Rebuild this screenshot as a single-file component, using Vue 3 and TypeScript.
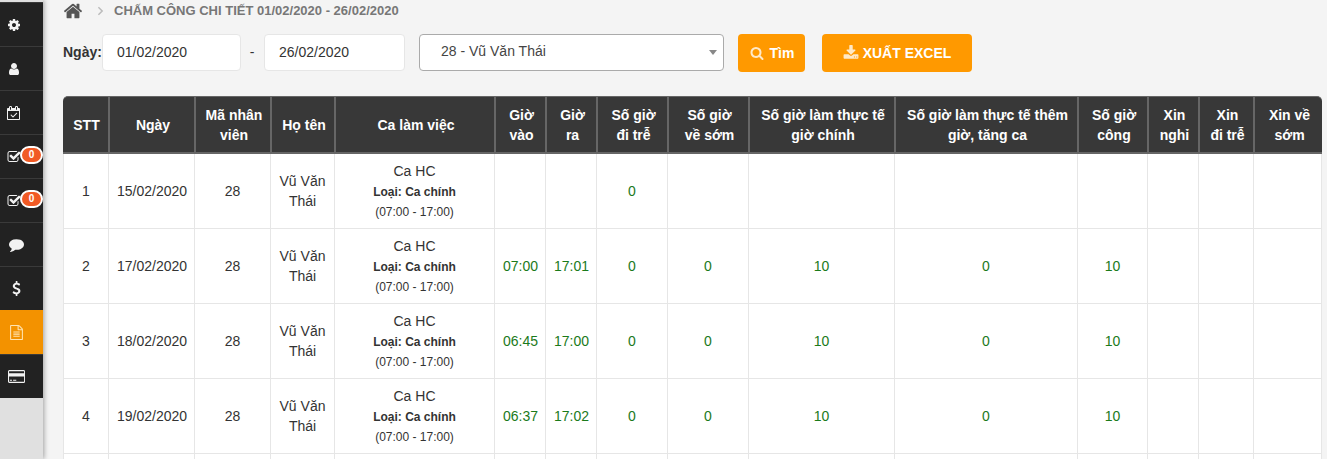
<script setup lang="ts">
const icons: Record<string, { box: string; d: string }> = {
  home: { box: '0 0 1792 1792', d: 'M1472 992v480q0 26-19 45t-45 19h-384v-384h-256v384h-384q-26 0-45-19t-19-45v-480q0-1 .5-3t.5-3l575-474 575 474q1 2 1 6zm223-69l-62 74q-8 9-21 11h-3q-13 0-21-7l-692-577-692 577q-12 8-24 7-13-2-21-11l-62-74q-8-10-7-23.500t11-21.500l719-599q32-26 76-26t76 26l244 204v-195q0-14 9-23t23-9h192q14 0 23 9t9 23v408l219 182q10 8 11 21.500t-7 23.500z' },
  cog: { box: '0 0 1792 1792', d: 'M1152 896q0-106-75-181t-181-75-181 75-75 181 75 181 181 75 181-75 75-181zm512-109v222q0 12-8 23t-20 13l-185 28q-19 54-39 91 35 50 107 138 10 12 10 25t-9 23q-27 37-99 108t-94 71q-12 0-26-9l-138-108q-44 23-91 38-16 136-29 186-7 28-36 28h-222q-14 0-24.500-8.500t-11.500-21.500l-28-184q-49-16-90-37l-141 107q-10 9-25 9-14 0-25-11-126-114-165-168-7-10-7-23 0-12 8-23 15-21 51-66.500t54-70.500q-27-50-41-99l-183-27q-13-2-21-12.500t-8-23.500v-222q0-12 8-23t19-13l186-28q14-46 39-92-40-57-107-138-10-12-10-24 0-10 9-23 26-36 98.500-107.500t94.500-71.500q13 0 26 10l138 107q44-23 91-38 16-136 29-186 7-28 36-28h222q14 0 24.500 8.500t11.500 21.500l28 184q49 16 90 37l142-107q9-9 24-9 13 0 25 10 129 119 165 170 7 8 7 22 0 12-8 23-15 21-51 66.500t-54 70.500q26 50 41 98l183 28q13 2 21 12.500t8 23.500z' },
  user: { box: '0 0 1792 1792', d: 'M1536 1399q0 109-62.500 187t-150.500 78h-854q-88 0-150.500-78t-62.500-187q0-85 8.500-160.500t31.500-152 58.500-131 94-89 134.500-34.500q131 128 313 128t313-128q76 0 134.500 34.500t94 89 58.500 131 31.500 152 8.500 160.500zm-256-887q0 159-112.500 271.500t-271.500 112.500-271.500-112.500-112.500-271.500 112.500-271.500 271.500-112.500 271.500 112.500 112.500 271.500z' },
  calendar: { box: '0 0 1792 1792', d: 'M1303 964l-512 512q-10 9-23 9t-23-9l-288-288q-9-10-9-23t9-22l46-46q9-9 22-9t23 9l220 220 444-444q10-9 23-9t22 9l46 46q9 9 9 22t-9 23zm-1175 700h1408v-1024h-1408v1024zm384-1216v-288q0-14-9-23t-23-9h-64q-14 0-23 9t-9 23v288q0 14 9 23t23 9h64q14 0 23-9t9-23zm768 0v-288q0-14-9-23t-23-9h-64q-14 0-23 9t-9 23v288q0 14 9 23t23 9h64q14 0 23-9t9-23zm384-64v1280q0 52-38 90t-90 38h-1408q-52 0-90-38t-38-90v-1280q0-52 38-90t90-38h128v-96q0-66 47-113t113-47h64q66 0 113 47t47 113v96h384v-96q0-66 47-113t113-47h64q66 0 113 47t47 113v96h128q52 0 90 38t38 90z' },
  check: { box: '0 0 1792 1792', d: 'M1472 930v318q0 119-84.500 203.500t-203.500 84.500h-832q-119 0-203.500-84.500t-84.500-203.500v-832q0-119 84.500-203.500t203.500-84.500h832q63 0 117 25 15 7 18 23 3 17-9 29l-49 49q-10 10-23 10-3 0-9-2-23-6-45-6h-832q-66 0-113 47t-47 113v832q0 66 47 113t113 47h832q66 0 113-47t47-113v-254q0-13 9-22l64-64q10-10 23-10 6 0 12 3 20 8 20 29zm231-489l-814 814q-24 24-57 24t-57-24l-430-430q-24-24-24-57t24-57l110-110q24-24 57-24t57 24l263 263 647-647q24-24 57-24t57 24l110 110q24 24 24 57t-24 57z' },
  comment: { box: '0 0 1792 1792', d: 'M1792 896q0 174-120 321.500t-326 233-450 85.500q-70 0-145-8-198 175-460 242-49 14-114 22-17 2-30.500-9t-17.500-29v-1q-3-4-.5-12t2-10 4.500-9.500l6-9 7-8.500 8-9q7-8 31-34.500t34.500-38 31-39.500 32.500-51 27-59 26-76q-157-89-247.500-220t-90.500-281q0-130 71-248.500t191-204.500 286-136.500 348-50.500q244 0 450 85.500t326 233 120 321.500z' },
  dollar: { box: '0 0 1792 1792', d: 'M1362 1185q0 153-99.500 263.500t-258.500 136.500v175q0 14-9 23t-23 9h-135q-13 0-22.500-9.500t-9.500-22.500v-175q-66-9-127.500-31t-101.500-44.500-74-48-46.500-37.500-17.500-18q-17-21-2-41l103-135q7-10 23-12 15-2 24 9l2 2q113 99 243 125 37 8 74 8 81 0 142.500-43t61.500-122q0-28-15-53t-33.500-42-58.500-37.500-66-32-80-32.500q-39-16-61.500-25t-61.500-26.500-62.500-31-56.500-35.500-53.500-42.500-43.500-49-35.500-58-21-66.500-8.500-78q0-138 98-242t255-134v-180q0-13 9.500-22.500t22.500-9.500h135q14 0 23 9t9 23v176q57 6 110.500 23t87 33.500 63.500 37.500 39 29 15 14q17 18 5 38l-81 146q-8 15-23 16-14 3-27-7-3-3-14.500-12t-39-26.500-58.500-32-74.500-26-85.500-11.500q-95 0-155 43t-60 111q0 26 8.500 48t29.500 41.500 39.500 33 56 31 60.500 27 70 27.500q53 20 81 31.500t76 35 75.500 42.500 62 50 53 63.500 31.500 76.500 13 94z' },
  file: { box: '0 0 1792 1792', d: 'M1596 380q28 28 48 76t20 88v1152q0 40-28 68t-68 28h-1344q-40 0-68-28t-28-68v-1600q0-40 28-68t68-28h896q40 0 88 20t76 48zm-444-244v376h376q-10-29-22-41l-313-313q-12-12-41-22zm384 1528v-1024h-416q-40 0-68-28t-28-68v-416h-768v1536h1280zm-1024-864q0-14 9-23t23-9h704q14 0 23 9t9 23v64q0 14-9 23t-23 9h-704q-14 0-23-9t-9-23v-64zm736 224q14 0 23 9t9 23v64q0 14-9 23t-23 9h-704q-14 0-23-9t-9-23v-64q0-14 9-23t23-9h704zm0 256q14 0 23 9t9 23v64q0 14-9 23t-23 9h-704q-14 0-23-9t-9-23v-64q0-14 9-23t23-9h704z' },
  card: { box: '0 0 2048 1792', d: 'M1888 128q66 0 113 47t47 113v1216q0 66-47 113t-113 47h-1728q-66 0-113-47t-47-113v-1216q0-66 47-113t113-47h1728zm-1728 128q-13 0-22.500 9.500t-9.500 22.500v224h1792v-224q0-13-9.500-22.500t-22.500-9.500h-1728zm1728 1280q13 0 22.500-9.500t9.500-22.500v-608h-1792v608q0 13 9.500 22.500t22.500 9.500h1728zm-1664-128v-128h256v128h-256zm384 0v-128h384v128h-384z' },
  search: { box: '0 0 1792 1792', d: 'M1216 832q0-185-131.500-316.500t-316.500-131.500-316.500 131.500-131.500 316.500 131.500 316.500 316.500 131.500 316.500-131.500 131.500-316.500zm512 832q0 52-38 90t-90 38q-54 0-90-38l-343-342q-179 124-399 124-143 0-273.500-55.500t-225-150-150-225-55.500-273.500 55.500-273.500 150-225 225-150 273.500-55.500 273.500 55.500 225 150 150 225 55.500 273.500q0 220-124 399l343 343q37 37 37 90z' },
  download: { box: '0 0 1792 1792', d: 'M1344 1344q0-26-19-45t-45-19-45 19-19 45 19 45 45 19 45-19 19-45zm256 0q0-26-19-45t-45-19-45 19-19 45 19 45 45 19 45-19 19-45zm128-224v320q0 40-28 68t-68 28h-1472q-40 0-68-28t-28-68v-320q0-40 28-68t68-28h465l135 136q58 56 136 56t136-56l136-136h464q40 0 68 28t28 68zm-325-569q17 41-14 70l-448 448q-18 19-45 19t-45-19l-448-448q-31-29-14-70 17-39 59-39h256v-448q0-26 19-45t45-19h256q26 0 45 19t19 45v448h256q42 0 59 39z' },
}

const navItems = [
  { icon: 'cog', wide: false, badge: false, active: false },
  { icon: 'user', wide: false, badge: false, active: false },
  { icon: 'calendar', wide: false, badge: false, active: false },
  { icon: 'check', wide: false, badge: true, active: false },
  { icon: 'check', wide: false, badge: true, active: false },
  { icon: 'comment', wide: true, badge: false, active: false },
  { icon: 'dollar', wide: true, badge: false, active: false },
  { icon: 'file', wide: true, badge: false, active: true },
  { icon: 'card', wide: true, badge: false, active: false },
]

const columns = [
  { title: 'STT', width: 45 },
  { title: 'Ngày', width: 86 },
  { title: 'Mã nhân viên', width: 76 },
  { title: 'Họ tên', width: 64 },
  { title: 'Ca làm việc', width: 160 },
  { title: 'Giờ vào', width: 51 },
  { title: 'Giờ ra', width: 51 },
  { title: 'Số giờ đi trễ', width: 71 },
  { title: 'Số giờ về sớm', width: 81 },
  { title: 'Số giờ làm thực tế giờ chính', width: 146 },
  { title: 'Số giờ làm thực tế thêm giờ, tăng ca', width: 183 },
  { title: 'Số giờ công', width: 70 },
  { title: 'Xin nghỉ', width: 51 },
  { title: 'Xin đi trễ', width: 55 },
  { title: 'Xin về sớm', width: 69 },
]

const rows = [
  { stt: 1, date: '15/02/2020', timeIn: '', timeOut: '', late: '0', early: '', main: '', extra: '', total: '' },
  { stt: 2, date: '17/02/2020', timeIn: '07:00', timeOut: '17:01', late: '0', early: '0', main: '10', extra: '0', total: '10' },
  { stt: 3, date: '18/02/2020', timeIn: '06:45', timeOut: '17:00', late: '0', early: '0', main: '10', extra: '0', total: '10' },
  { stt: 4, date: '19/02/2020', timeIn: '06:37', timeOut: '17:02', late: '0', early: '0', main: '10', extra: '0', total: '10' },
]
</script>

<template>
  <div class="page">
    <aside class="sidebar">
      <nav class="nav">
        <a
          v-for="(item, i) in navItems"
          :key="i"
          class="nav-item"
          :class="{ active: item.active, wide: item.wide }"
        >
          <svg class="nav-icon" :viewBox="icons[item.icon].box" fill="currentColor">
            <path :d="icons[item.icon].d" />
          </svg>
          <span v-if="item.badge" class="badge">0</span>
        </a>
      </nav>
    </aside>

    <main class="content">
      <div class="breadcrumb">
        <svg class="home" :viewBox="icons.home.box" fill="currentColor"><path :d="icons.home.d" /></svg>
        <svg class="chevron" viewBox="0 0 8 12" fill="none" stroke="currentColor" stroke-width="1.8">
          <path d="M1.500 1.500 6 6l-4.500 4.500" />
        </svg>
        <span>CHẤM CÔNG CHI TIẾT 01/02/2020 - 26/02/2020</span>
      </div>

      <div class="filters">
        <label class="filter-label">Ngày:</label>
        <input class="date-input first" value="01/02/2020" />
        <span class="dash">-</span>
        <input class="date-input second" value="26/02/2020" />
        <div class="select-box">
          <span>28 - Vũ Văn Thái</span>
          <i class="caret"></i>
        </div>
        <button class="btn btn-find">
          <svg class="btn-icon" :viewBox="icons.search.box" fill="currentColor"><path :d="icons.search.d" /></svg>
          Tìm
        </button>
        <button class="btn btn-excel">
          <svg class="btn-icon" :viewBox="icons.download.box" fill="currentColor"><path :d="icons.download.d" /></svg>
          XUẤT EXCEL
        </button>
      </div>

      <table class="grid">
        <colgroup>
          <col v-for="c in columns" :key="c.title" :style="{ width: c.width + 'px' }" />
        </colgroup>
        <thead>
          <tr>
            <th v-for="c in columns" :key="c.title">{{ c.title }}</th>
          </tr>
        </thead>
        <tbody>
          <tr v-for="r in rows" :key="r.stt">
            <td>{{ r.stt }}</td>
            <td>{{ r.date }}</td>
            <td>28</td>
            <td>Vũ Văn Thái</td>
            <td class="shift">
              <div class="shift-name">Ca HC</div>
              <div class="shift-type">Loại: Ca chính</div>
              <div class="shift-time">(07:00 - 17:00)</div>
            </td>
            <td class="green">{{ r.timeIn }}</td>
            <td class="green">{{ r.timeOut }}</td>
            <td class="green">{{ r.late }}</td>
            <td class="green">{{ r.early }}</td>
            <td class="green">{{ r.main }}</td>
            <td class="green">{{ r.extra }}</td>
            <td class="green">{{ r.total }}</td>
            <td></td>
            <td></td>
            <td></td>
          </tr>
          <tr>
            <td v-for="c in columns" :key="c.title"></td>
          </tr>
        </tbody>
      </table>
    </main>
  </div>
</template>

<style>
html,
body {
  margin: 0;
  height: 100%;
  overflow: hidden;
  background: #f4f4f4;
}
</style>

<style scoped>
.page {
  display: flex;
  height: 100vh;
  overflow: hidden;
  font-family: "Liberation Sans", Arial, sans-serif;
  font-size: 14px;
  color: #333;
}

.sidebar {
  flex: none;
  width: 43px;
  background: #e0e0e0;
  box-shadow: 1px 0 5px rgba(0, 0, 0, 0.35);
  padding-top: 2px;
  box-sizing: border-box;
}

.nav-item {
  position: relative;
  display: flex;
  align-items: center;
  justify-content: center;
  width: 43px;
  height: 44px;
  padding-right: 15px;
  box-sizing: border-box;
  background: #222;
  color: #f2f2f2;
  border-top: 1px solid #3a3a3a;
}

.nav-item.wide {
  padding-right: 10px;
}

.nav-item.active {
  background: #f39200;
  border-top-color: #f39200;
  color: #ffe3b0;
}

.nav-icon {
  height: 15px;
  width: auto;
  display: block;
}

.nav-item:not(.wide) .nav-icon {
  height: 14px;
}

.badge {
  position: absolute;
  left: 20px;
  top: 11px;
  width: 23px;
  height: 18px;
  box-sizing: border-box;
  border: 2px solid #fff;
  border-radius: 9px;
  background: #f15a24;
  color: #fff;
  font-size: 10px;
  font-weight: 700;
  line-height: 14px;
  text-align: center;
}

.content {
  flex: 1;
  min-width: 0;
  padding: 0 5px 0 20px;
}

.breadcrumb {
  display: flex;
  align-items: center;
  height: 21px;
  color: #777;
  font-size: 13px;
  font-weight: 700;
}

.home {
  width: 20px;
  height: 20px;
  color: #555;
}

.chevron {
  width: 7px;
  height: 10px;
  margin-left: 14px;
  margin-right: 10px;
  color: #bbb;
}

.filters {
  display: flex;
  align-items: flex-start;
  margin-top: 13px;
  height: 62px;
}

.filter-label {
  font-weight: 700;
  width: 39px;
  line-height: 37px;
}

.date-input {
  box-sizing: border-box;
  height: 37px;
  padding: 0 14px 2px;
  border: 1px solid #e6e6e6;
  border-radius: 4px;
  background: #fff;
  color: #333;
  font: inherit;
  outline: none;
}

.date-input.first {
  width: 139px;
}

.date-input.second {
  width: 141px;
}

.dash {
  width: 23px;
  text-align: center;
  line-height: 37px;
  padding-right: 1px;
  box-sizing: border-box;
}

.select-box {
  position: relative;
  box-sizing: border-box;
  width: 305px;
  height: 37px;
  margin-left: 14px;
  padding-left: 21px;
  line-height: 33px;
  border: 1px solid #aaa;
  border-radius: 4px;
  background: #fff;
  color: #444;
}

.caret {
  position: absolute;
  right: 6px;
  top: 15px;
  border-left: 4px solid transparent;
  border-right: 4px solid transparent;
  border-top: 5px solid #888;
}

.btn {
  display: flex;
  align-items: center;
  justify-content: center;
  height: 38px;
  padding: 0;
  border: 0;
  border-radius: 4px;
  background: #ff9900;
  color: #fff;
  font: inherit;
  font-weight: 700;
}

.btn-find {
  width: 67px;
  margin-left: 14px;
  gap: 6px;
  padding-left: 1px;
}

.btn-excel {
  width: 150px;
  margin-left: 17px;
  gap: 4px;
}

.btn-icon {
  width: 14px;
  height: 14px;
  color: #ffe9c7;
}

.btn-excel .btn-icon {
  width: 16px;
  height: 16px;
}

.grid {
  width: 1259px;
  table-layout: fixed;
  border-collapse: separate;
  border-spacing: 0;
}

.grid th {
  height: 58px;
  box-sizing: border-box;
  padding: 0 7px 0 9px;
  background: #383838;
  color: #fff;
  font-weight: 700;
  line-height: 20px;
  text-align: center;
  border-top: 1px solid #666;
  border-left: 2px solid #666;
  border-bottom: 2px solid #666;
}

.grid th:first-child {
  border-left: 0;
  border-top-left-radius: 5px;
}

.grid th:last-child {
  border-top-right-radius: 5px;
}

.grid td {
  height: 75px;
  box-sizing: border-box;
  padding: 0 8px;
  background: #fff;
  text-align: center;
  line-height: 20px;
  border-left: 1px solid #e6e6e6;
  border-bottom: 1px solid #e6e6e6;
}

.grid td:last-child {
  border-right: 1px solid #e6e6e6;
}

.grid td.shift {
  padding-top: 1px;
}

.shift-name {
  line-height: 20px;
}

.shift-type {
  margin-top: 1px;
  font-size: 12px;
  font-weight: 700;
  line-height: 20px;
}

.shift-time {
  font-size: 12px;
  line-height: 20px;
}

.green {
  color: #1b7a1b;
}
</style>
